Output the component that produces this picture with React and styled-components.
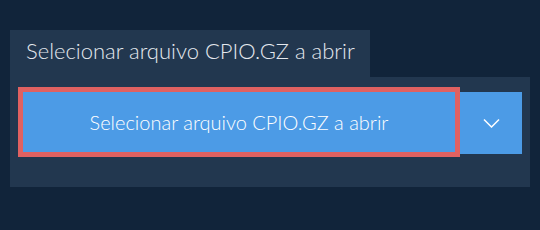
import styled, { createGlobalStyle } from 'styled-components';

const GlobalStyle = createGlobalStyle`
  html, body {
    margin: 0;
    background: #11243a;
    font-family: Lato, "Open Sans", sans-serif;
  }
`;

const Page = styled.div`
  padding: 30px 10px 0 10px;
`;

const Tab = styled.div`
  display: inline-block;
  width: 360px;
  height: 47px;
  box-sizing: border-box;
  padding: 6px 0 0 16px;
  background: #22374f;
  color: #e4e8ee;
  font-size: 22px;
  font-weight: 300;
  line-height: 30px;
  vertical-align: top;
`;

const Panel = styled.div`
  width: 520px;
  box-sizing: border-box;
  padding: 10px 8px 30px 8px;
  background: #22374f;
`;

const Row = styled.div`
  display: flex;
  align-items: flex-start;
`;

const MainButton = styled.button`
  width: 442px;
  height: 70px;
  box-sizing: border-box;
  border: 5px solid #e06161;
  background: #4c9be6;
  color: #ffffff;
  font-family: Lato, "Open Sans", sans-serif;
  font-size: 20px;
  font-weight: 300;
  padding: 0;
  cursor: pointer;
`;

const DropButton = styled.button`
  width: 62px;
  height: 62px;
  margin-top: 5px;
  border: none;
  background: #4c9be6;
  display: flex;
  align-items: center;
  justify-content: center;
  padding: 0;
  cursor: pointer;
`;

const Chevron = () => (
  <svg width="17" height="10" viewBox="0 0 17 10" fill="none">
    <path d="M1 1.5l7.5 7.5 7.5-7.5" stroke="#ffffff" strokeWidth="1.5" />
  </svg>
);

export default function App() {
  return (
    <>
      <GlobalStyle />
      <Page>
        <Tab>Selecionar arquivo CPIO.GZ a abrir</Tab>
        <Panel>
          <Row>
            <MainButton>Selecionar arquivo CPIO.GZ a abrir</MainButton>
            <DropButton>
              <Chevron />
            </DropButton>
          </Row>
        </Panel>
      </Page>
    </>
  );
}
